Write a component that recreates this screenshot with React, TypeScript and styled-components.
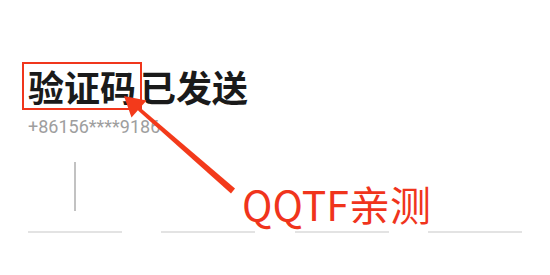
import styled, { createGlobalStyle } from "styled-components";

const GlobalStyle = createGlobalStyle`
  html, body {
    margin: 0;
    padding: 0;
    background: #ffffff;
  }
  body {
    font-family: Roboto, "Noto Sans CJK SC", sans-serif;
  }
`;

const Page = styled.div`
  position: relative;
  width: 550px;
  height: 275px;
  overflow: hidden;
  background: #ffffff;
`;

const Content = styled.div`
  display: flex;
  flex-direction: column;
  padding: 62px 28px 0 28px;
`;

const Title = styled.h1`
  margin: 0;
  font-family: "Noto Sans CJK SC", sans-serif;
  font-size: 36px;
  font-weight: 700;
  line-height: 48px;
  color: #1a1a1a;
  display: flex;
  align-items: center;
`;

const Highlight = styled.span`
  display: inline-block;
  margin-left: -6px;
  margin-right: -2px;
  padding: 0 4px;
  border: 2px solid #f0361c;
  line-height: 44px;
`;

const Phone = styled.div`
  margin-top: 6px;
  font-family: Roboto, sans-serif;
  font-size: 18px;
  line-height: 22px;
  color: #9e9e9e;
`;

const CodeRow = styled.div`
  display: grid;
  grid-template-columns: repeat(4, 94px);
  justify-content: space-between;
  margin-top: 22px;
`;

const Slot = styled.div`
  height: 69px;
  padding-top: 2px;
  display: flex;
  justify-content: center;
  align-items: flex-start;
  border-bottom: 2px solid #e3e3e3;
`;

const Caret = styled.div`
  width: 2px;
  height: 49px;
  background: #c2c2c2;
`;

const Arrow = styled.svg`
  position: absolute;
  left: 0;
  top: 0;
  width: 550px;
  height: 275px;
  pointer-events: none;
`;

const Note = styled.div`
  position: absolute;
  left: 242px;
  top: 179px;
  font-family: "Noto Sans CJK SC", sans-serif;
  font-size: 41px;
  line-height: 48px;
  color: #f0341c;
  white-space: nowrap;
`;

export default function App() {
  const slots = [true, false, false, false];
  return (
    <Page>
      <GlobalStyle />
      <Content>
        <Title>
          <Highlight>验证码</Highlight>已发送
        </Title>
        <Phone>+86156****9186</Phone>
        <CodeRow>
          {slots.map((active, i) => (
            <Slot key={i}>{active && <Caret />}</Slot>
          ))}
        </CodeRow>
      </Content>
      <Arrow viewBox="0 0 550 275">
        <polygon points="124,96 131.5,117.5 146.5,100.5" fill="#f33a1b" />
        <polygon points="138,110.5 140,107.5 235,188.5 231,193.5" fill="#f33a1b" />
      </Arrow>
      <Note>QQTF亲测</Note>
    </Page>
  );
}
